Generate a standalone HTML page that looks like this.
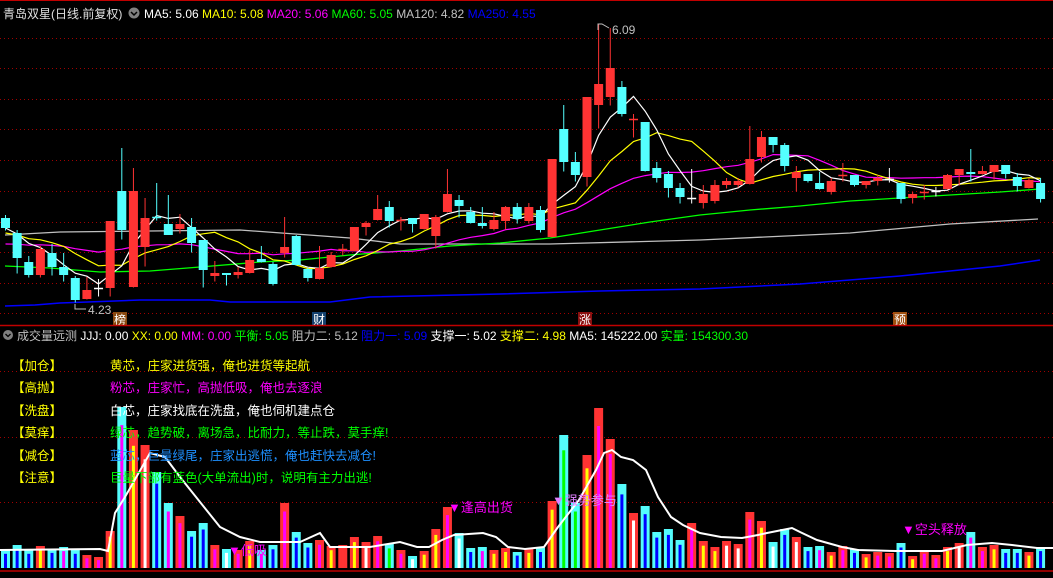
<!DOCTYPE html>
<html><head><meta charset="utf-8">
<style>
html,body{margin:0;padding:0;background:#000;width:1053px;height:578px;overflow:hidden}
svg{display:block}
text{font-family:"Liberation Sans","Noto Sans CJK SC",sans-serif;font-size:12px}
</style></head>
<body>
<svg id="s" width="1053" height="578" xmlns="http://www.w3.org/2000/svg">
<rect width="1053" height="578" fill="#000"/>
<line x1="0" y1="0.5" x2="1053" y2="0.5" stroke="#c00000"/>
<g id="grid"></g>
<g id="mas"></g>
<g id="candles"></g>
<polyline points="598,30 598,24 602,24 609,28" fill="none" stroke="#c0c0c0"/>
<text x="612" y="34" fill="#c0c0c0">6.09</text>
<polyline points="80,309 75,309 75,304" fill="none" stroke="#c0c0c0"/>
<line x1="75" y1="309" x2="86" y2="309" stroke="#c0c0c0"/>
<text x="88" y="314" fill="#c0c0c0">4.23</text>
<rect x="113" y="312" width="14" height="13" fill="#8a4a10"/><text x="114" y="324" fill="#fff" style="font-size:12px">榜</text>
<rect x="312" y="312" width="14" height="13" fill="#13406e"/><text x="313" y="324" fill="#fff" style="font-size:12px">财</text>
<rect x="578" y="312" width="14" height="13" fill="#8a1010"/><text x="579" y="324" fill="#fff" style="font-size:12px">涨</text>
<rect x="893" y="312" width="14" height="13" fill="#a05010"/><text x="894" y="324" fill="#fff" style="font-size:12px">预</text>
<text x="3" y="18" fill="#e0e0e0">青岛双星(日线.前复权)</text>
<circle cx="134" cy="13" r="5.5" fill="#808080"/><polyline points="131,12 134,15 137,12" fill="none" stroke="#000" stroke-width="1.5"/>
<text x="144" y="18"><tspan fill="#fff">MA5: 5.06 </tspan><tspan fill="#ffff00">MA10: 5.08 </tspan><tspan fill="#ff00ff">MA20: 5.06 </tspan><tspan fill="#00ff00">MA60: 5.05 </tspan><tspan fill="#c0c0c0">MA120: 4.82 </tspan><tspan fill="#0000ff">MA250: 4.55</tspan></text>
<line x1="0" y1="325.5" x2="1053" y2="325.5" stroke="#c00000" stroke-width="1.5"/>
<circle cx="8" cy="335" r="5" fill="#808080"/><polyline points="5.5,334 8,336.5 10.5,334" fill="none" stroke="#000" stroke-width="1.3"/>
<text x="17" y="340" fill="#c0c0c0"><tspan>成交量远测 </tspan><tspan fill="#fff">JJJ: 0.00 </tspan><tspan fill="#ffff00">XX: 0.00 </tspan><tspan fill="#ff00ff">MM: 0.00 </tspan><tspan fill="#00ff00">平衡: 5.05 </tspan><tspan fill="#c0c0c0">阻力二: 5.12 </tspan><tspan fill="#0000ff">阻力一: 5.09 </tspan><tspan fill="#fff">支撑一: 5.02 </tspan><tspan fill="#ffff00">支撑二: 4.98 </tspan><tspan fill="#fff">MA5: 145222.00 </tspan><tspan fill="#00ff00">实量: 154300.30</tspan></text>
<g id="vgrid"></g>
<g id="vol"></g>
<polyline id="vline" fill="none" stroke="#fff" stroke-width="2"/>
<g style="font-size:12.5px">
<text x="12" y="370" fill="#ffff00" style="font-size:12.5px">【加仓】</text><text x="110" y="370" fill="#ffff00" style="font-size:12.5px">黄芯，庄家进货强，俺也进货等起航</text>
<text x="12" y="392" fill="#ffff00" style="font-size:12.5px">【高抛】</text><text x="110" y="392" fill="#ff00ff" style="font-size:12.5px">粉芯，庄家忙，高抛低吸，俺也去逐浪</text>
<text x="12" y="415" fill="#ffff00" style="font-size:12.5px">【洗盘】</text><text x="110" y="415" fill="#fff" style="font-size:12.5px">白芯，庄家找底在洗盘，俺也伺机建点仓</text>
<text x="12" y="437" fill="#ffff00" style="font-size:12.5px">【莫痒】</text><text x="110" y="437" fill="#00ff00" style="font-size:12.5px">绿芯，趋势破，离场急，比耐力，等止跌，莫手痒!</text>
<text x="12" y="460" fill="#ffff00" style="font-size:12.5px">【减仓】</text><text x="110" y="460" fill="#1e90ff" style="font-size:12.5px">蓝芯，巨量绿尾，庄家出逃慌，俺也赶快去减仓!</text>
<text x="12" y="482" fill="#ffff00" style="font-size:12.5px">【注意】</text><text x="110" y="482" fill="#00ff00" style="font-size:12.5px">巨量下部有蓝色(大单流出)时，说明有主力出逃!</text>
</g>
<text x="448" y="512" fill="#ff00ff" style="font-size:13px">▼逢高出货</text>
<text x="552" y="505" fill="#e080ff" style="font-size:13px">▼强势参与</text>
<text x="902" y="534" fill="#ff00ff" style="font-size:13px">▼空头释放</text>
<text x="228" y="555" fill="#ff00ff" style="font-size:13px">▼低吸</text>
<line x1="0" y1="571" x2="1053" y2="571" stroke="#c00000" stroke-width="1.5"/>
<circle cx="8" cy="583" r="5" fill="#808080"/>
<text x="17" y="587" fill="#c0c0c0"><tspan>MACD(12,26,9) </tspan><tspan fill="#fff">DIF: 0.01 </tspan><tspan fill="#ffff00">DEA: 0.00 </tspan><tspan fill="#ff00ff">MACD: 0.00</tspan></text>
</svg>
<script>
var NS="http://www.w3.org/2000/svg";
function el(t,a,p){var e=document.createElementNS(NS,t);for(var k in a)e.setAttribute(k,a[k]);p.appendChild(e);return e;}
var g=document.getElementById('grid');
[38,68,99,129,160,191,222,252,283,313].forEach(function(y){el('line',{x1:0,y1:y+.5,x2:1053,y2:y+.5,stroke:'#a00000','stroke-dasharray':'1 3'},g);});
var vg=document.getElementById('vgrid');
[371,437,502].forEach(function(y){el('line',{x1:0,y1:y+.5,x2:1053,y2:y+.5,stroke:'#a00000','stroke-dasharray':'1 3'},vg);});
var C=[
['c',218,228,215,230],['c',233,258,230,273],['c',262,275,256,277],['r',249,275,246,277],['c',253,267,244,275],
['c',267,275,253,281],['c',278,300,276,302],['r',290,299,277,299],['w',288,288,279,296],['r',221,288,221,296],
['c',191,230,148,239],['r',191,287,168,287],['r',218,247,198,266],['c',217,218,183,220],['c',224,235,195,233],
['r',224,229,214,233],['c',227,243,218,252],['c',240,270,240,287],['r',273,276,261,281],['c',273,275,273,285],
['r',272,275,267,278],['r',260,273,250,273],['c',259,262,246,262],['c',264,284,262,285],['r',247,253,217,257],
['c',236,265,235,265],['c',269,278,268,281],['r',268,279,246,279],['r',255,267,252,267],['rc',249,249,244,255],
['r',227,251,227,251],['r',223,227,221,235],['r',209,220,195,220],['c',207,221,201,227],['r',220,221,217,230],
['c',218,224,218,232],['r',214,229,214,229],['r',217,236,215,248],['r',194,212,169,212],['c',200,206,195,217],
['c',212,223,207,223],['c',223,226,207,228],['r',220,229,212,230],['r',207,221,206,229],['c',207,219,203,223],
['r',207,221,203,223],['c',210,230,206,232],['r',159,237,159,237],['c',129,162,105,171],['c',162,175,152,181],
['r',97,177,97,186],['r',84,105,24,128],['r',68,97,28,105],['c',87,114,81,116],['rc',119,119,114,137],
['c',122,171,122,171],['c',168,178,162,182],['c',174,188,171,197],['c',188,197,183,203],['w',198,198,169,203],
['r',194,203,185,208],['r',185,201,180,203],['r',181,185,178,188],['r',181,185,178,187],['r',159,184,126,184],
['r',137,157,131,162],['c',137,145,137,152],['c',145,166,143,171],['r',172,178,166,191],['c',174,181,174,182],
['c',183,189,172,189],['r',181,192,178,194],['rc',175,176,163,181],['c',175,185,175,186],['r',181,185,181,188],
['r',178,181,175,185],['w',179,179,168,182],['c',183,199,183,203],['r',194,198,192,203],['rc',192,193,185,199],
['w',191,191,187,196],['r',175,189,174,189],['r',169,175,169,185],['c',172,174,149,181],['r',171,174,166,174],
['r',165,172,165,179],['c',165,174,165,178],['c',177,186,173,191],['r',180,188,178,188],['c',183,199,178,202]];
var SP=11.63;function X(i){return 5.5+i*SP;}
var cg=document.getElementById('candles');
var closes=[];
C.forEach(function(c,i){
 var t=c[0],x=X(i),col=(t=='r'||t=='rc')?'#ff3333':(t=='w'?'#ffffff':'#54ffff');
 el('line',{x1:x,y1:c[3],x2:x,y2:c[4]+0.5,stroke:col},cg);
 var h=c[2]-c[1];
 if(h<2){el('line',{x1:x-4.5,y1:c[1]+.5,x2:x+4.5,y2:c[1]+.5,stroke:col,'stroke-width':1.5},cg);}
 else el('rect',{x:x-4.5,y:c[1],width:9,height:h,fill:col},cg);
 closes.push(t=='r'||t=='rc'?c[1]:(t=='c'?c[2]:c[1]));
});
var pad=[];for(var k=0;k<10;k++)pad.push(255);for(k=0;k<5;k++)pad.push(238);for(k=0;k<4;k++)pad.push(228);
var all=pad.concat(closes);
function ma(n,color){var pts=[];for(var i=0;i<closes.length;i++){var s=0;for(var j=0;j<n;j++)s+=all[pad.length+i-j];pts.push(X(i).toFixed(1)+','+(s/n).toFixed(1));}
 el('polyline',{points:pts.join(' '),fill:'none',stroke:color,'stroke-width':1.2},document.getElementById('mas'));}
var mg=document.getElementById('mas');
el('polyline',{points:'5,306 35,305 60,303 115,301 140,300 210,300 230,302 330,302 370,297 500,294 600,291 700,289 800,284 900,276 1000,266 1040,260',fill:'none',stroke:'#0000ff','stroke-width':1.5},mg);
el('polyline',{points:'5,235 60,232 150,231 240,230 350,238 400,244 550,244 700,240 850,233 950,224 1038,219',fill:'none',stroke:'#c0c0c0','stroke-width':1.3},mg);
el('polyline',{points:'5,266 50,268 100,272 150,271 200,267 260,262 300,260 350,255 400,251 450,246 500,243 550,238 600,230 650,222 700,215 750,210 800,206 850,201 900,198 950,195 1000,192 1040,189',fill:'none',stroke:'#00ff00','stroke-width':1.3},mg);
ma(20,'#ff00ff');ma(10,'#ffff00');ma(5,'#ffffff');
var V=[[550,'c','b'],[545,'c','b'],[550,'c','b'],[546,'r','y'],[549,'c','b'],[547,'c','m'],[550,'c','b'],[555,'r','m'],[557,'r','m'],[531,'r','y'],
[407,'c','m'],[430,'r','y'],[445,'r','w'],[472,'c','b'],[503,'c','m'],[516,'r','m'],[531,'c','b'],[523,'c','b'],[545,'r','m'],[549,'c','w'],
[550,'r','m'],[541,'r','y'],[550,'c','m'],[545,'c','b'],[503,'r','m'],[532,'c','b'],[543,'c','b'],[540,'r','m'],[546,'r','y'],[545,'r','r'],
[537,'r','y'],[542,'r','w'],[536,'r','m'],[544,'c','g'],[550,'r','m'],[556,'c','w'],[551,'r','y'],[529,'r','y'],[507,'r','m'],[533,'c','w'],
[548,'c','b'],[547,'c','m'],[550,'r','y'],[548,'r','y'],[552,'c','b'],[549,'r','y'],[548,'c','b'],[501,'r','y'],[435,'c','g'],[503,'c','g'],
[455,'r','y'],[408,'r','m'],[439,'r','m'],[484,'c','b'],[513,'r','w'],[506,'c','b'],[532,'c','b'],[529,'c','b'],[540,'c','b'],[523,'r','m'],
[541,'r','y'],[547,'r','y'],[541,'r','w'],[544,'r','w'],[512,'r','m'],[521,'r','y'],[542,'c','w'],[529,'c','b'],[537,'r','w'],[547,'c','b'],
[546,'c','m'],[552,'r','y'],[546,'r','m'],[549,'c','b'],[554,'r','y'],[552,'r','m'],[553,'r','m'],[543,'c','b'],[556,'r','y'],[550,'r','m'],
[555,'r','m'],[547,'r','y'],[543,'r','w'],[532,'c','m'],[547,'r','m'],[545,'r','y'],[549,'c','b'],[549,'c','b'],[552,'r','y'],[547,'c','b']];
var IC={b:'#0000ff',y:'#ffff00',m:'#ff00ff',w:'#ffffff',g:'#00ff00',r:'#ff3333'};
var vgp=document.getElementById('vol'),B=568;
V.forEach(function(v,i){var x=X(i),t=v[0];
 el('rect',{x:x-4.5,y:t,width:9,height:B-t,fill:v[1]=='r'?'#ff3333':'#54fcfc'},vgp);
 var it=t+(B-t)*0.1+2;
 el('rect',{x:x-1.5,y:it,width:3,height:B-it,fill:IC[v[2]]},vgp);
});
document.getElementById('vline').setAttribute('points','0,550 100,549 108,551 115,513 125,497 150,453 165,457 180,477 200,502 220,527 240,537 260,542 300,542 320,533 330,547 370,547 400,542 417,547 429,547 442,540 454,535 483,533 496,537 508,547 525,549 544,547 558,527 579,500 596,470 604,453 612,450 621,457 633,460 646,470 658,497 671,517 683,525 700,533 721,537 742,538 758,535 767,533 792,528 800,532 817,540 842,547 858,550 896,551 942,551 967,545 992,543 1012,545 1037,548 1053,548');
</script>
</body></html>
